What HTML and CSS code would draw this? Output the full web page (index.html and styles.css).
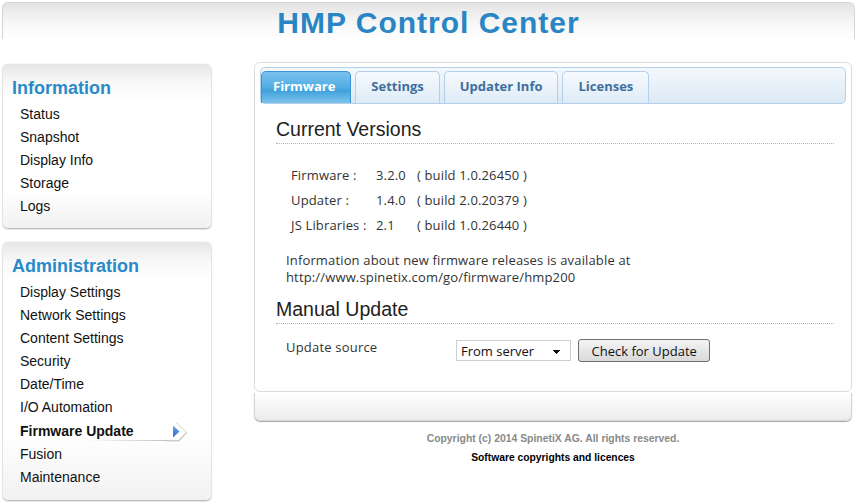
FILE: index.html
```html
<!DOCTYPE html>
<html>

<head>
  <meta charset="UTF-8">
  <meta name="viewport" content="width=device-width, initial-scale=1.0">
  <title>HMP Control Center</title>
  <link rel="stylesheet" href="styles.css">
</head>

<body>
  <div class="header">
    <h1>HMP Control Center</h1>
  </div>

  <div class="layout">
    <div class="sidebar">
      <div class="menu">
        <div class="menu-title">Information</div>
        <ul class="menu-list">
          <li class="menu-item">Status</li>
          <li class="menu-item">Snapshot</li>
          <li class="menu-item">Display Info</li>
          <li class="menu-item">Storage</li>
          <li class="menu-item">Logs</li>
        </ul>
      </div>
      <div class="menu">
        <div class="menu-title">Administration</div>
        <ul class="menu-list">
          <li class="menu-item">Display Settings</li>
          <li class="menu-item">Network Settings</li>
          <li class="menu-item">Content Settings</li>
          <li class="menu-item">Security</li>
          <li class="menu-item">Date/Time</li>
          <li class="menu-item">I/O Automation</li>
          <li class="menu-item active">
            <span class="active-label">Firmware Update</span>
            <svg class="arrow" width="24" height="23" viewBox="0 0 24 23">
              <defs>
                <linearGradient id="tri" x1="0" y1="0" x2="0" y2="1">
                  <stop offset="0" stop-color="#6aa6ee" />
                  <stop offset="1" stop-color="#2a6cc9" />
                </linearGradient>
              </defs>
              <polygon points="0,2.5 10,2.5 20.5,12 12.5,20.5 0,20.5" fill="#fff" />
              <polyline points="10,2.5 20.5,12 12.5,20.5" fill="none" stroke="#d4d4d4" stroke-width="1" />
              <polyline points="20.5,12.8 13,20.8 0,20.8" fill="none" stroke="#b5b5b5" stroke-width="1" />
              <polygon points="7,5.5 13.5,11.5 7,17.5" fill="url(#tri)" />
            </svg>
          </li>
          <li class="menu-item">Fusion</li>
          <li class="menu-item">Maintenance</li>
        </ul>
      </div>
    </div>

    <div class="main">
      <div class="panel">
        <div class="tabs">
          <div class="tab selected">Firmware</div>
          <div class="tab">Settings</div>
          <div class="tab">Updater Info</div>
          <div class="tab">Licenses</div>
        </div>

        <h2 class="section">Current Versions</h2>
        <table class="versions">
          <tr>
            <td class="v-label">Firmware :</td>
            <td class="v-num">3.2.0</td>
            <td>( build 1.0.26450 )</td>
          </tr>
          <tr>
            <td class="v-label">Updater :</td>
            <td class="v-num">1.4.0</td>
            <td>( build 2.0.20379 )</td>
          </tr>
          <tr>
            <td class="v-label">JS Libraries :</td>
            <td class="v-num">2.1</td>
            <td>( build 1.0.26440 )</td>
          </tr>
        </table>
        <p class="info">Information about new firmware releases is available at<br>http://www.spinetix.com/go/firmware/hmp200</p>

        <h2 class="section">Manual Update</h2>
        <div class="update-row">
          <span class="update-label">Update source</span>
          <select class="source">
            <option>From server</option>
          </select>
          <button class="check">Check for Update</button>
        </div>
      </div>
      <div class="panel-foot"></div>

      <div class="copyright">Copyright (c) 2014 SpinetiX AG. All rights reserved.</div>
      <div class="licences">Software copyrights and licences</div>
    </div>
  </div>
</body>

</html>
```

FILE: styles.css
```css
html {
  background: #fff;
}

body {
  margin: 0;
  font-family: "Liberation Sans", Arial, sans-serif;
  color: #111;
}

.header {
  margin: 2px 3px 0 2px;
  height: 36px;
  border: 1px solid #d6d6d6;
  border-bottom: 0;
  border-radius: 6px 6px 0 0;
  background: linear-gradient(#e3e3e3, #f7f7f7 55%, #fff);
}

.header h1 {
  margin: 0;
  text-align: center;
  font-size: 30px;
  line-height: 40px;
  letter-spacing: 1px;
  color: #2985c3;
}

.layout {
  display: flex;
  padding-left: 3px;
  margin-top: 23px;
}

/* sidebar */
.sidebar {
  width: 208px;
  margin-top: 2px;
}

.menu {
  margin-bottom: 14px;
  border-radius: 5px;
  box-shadow: 0 1px 2px rgba(0, 0, 0, 0.35), 0 0 1px rgba(0, 0, 0, 0.15);
  background: #fff;
}

.menu-title {
  height: 20px;
  padding: 14px 0 4px 9px;
  line-height: 20px;
  font-size: 18px;
  font-weight: bold;
  color: #2a8ac8;
  border-radius: 5px 5px 0 0;
  background: linear-gradient(#e6e6e6, #f8f8f8 50%, #fff);
}

.menu-list {
  list-style: none;
  margin: 0;
  padding: 1px 0 10px;
  border-radius: 0 0 5px 5px;
  background: linear-gradient(#fff 70%, #f1f1f1);
}

.menu:last-child .menu-list {
  padding: 0.5px 0 11px;
}

.menu-item {
  height: 23.1px;
  line-height: 23px;
  padding-left: 17px;
  font-size: 14px;
}

.menu-item.active {
  display: flex;
  font-weight: bold;
}

.active-label {
  width: 146px;
  background: linear-gradient(to right, transparent 45%, #c2c2c2) no-repeat left bottom 2px / 100% 1px;
}

/* main area */
.main {
  width: 598px;
  margin-left: 43px;
}

.panel {
  border: 1px solid #dcdcdc;
  border-radius: 6px;
  padding: 4px 5px 29px;
  font-family: "Open Sans", sans-serif;
  font-size: 13px;
  color: #333;
}

.tabs {
  display: flex;
  gap: 4px;
  height: 32px;
  padding: 3px 0 0 0;
  border: 1px solid #b3cfe9;
  border-radius: 5px;
  background: linear-gradient(#f3f8fc, #dce9f5);
}

.tab {
  padding: 0 15px;
  line-height: 29px;
  height: 31px;
  margin-bottom: -1px;
  border: 1px solid #b3cfe9;
  border-bottom: 0;
  border-radius: 5px 5px 0 0;
  background: linear-gradient(#f6fafd, #deebf6);
  font-family: "Open Sans", sans-serif;
  font-weight: bold;
  font-size: 13px;
  color: #3f6f9d;
}

.tab.selected {
  padding: 0 15px 0 11px;
  border-color: #3b93d6;
  background: linear-gradient(#79c2ee, #52ade3 50%, #3ea1dc 60%, #7ec3ec);
  color: #fff;
}

.section {
  margin: 13px 12px 0 16px;
  padding-bottom: 2px;
  border-bottom: 1px dotted #b5b5b5;
  font-family: "Liberation Sans", Arial, sans-serif;
  font-weight: normal;
  font-size: 19.5px;
  line-height: 24px;
  color: #222;
}

.info + .section {
  margin-top: 11px;
}

.versions {
  margin: 19px 0 0 31px;
  border-collapse: collapse;
  letter-spacing: 0.15px;
}

.versions td {
  padding: 0;
  height: 25px;
  line-height: 25px;
  white-space: pre;
}

.v-label {
  width: 85px;
}

.v-num {
  width: 41px;
}

.info {
  margin: 14px 0 0 26px;
  line-height: 17px;
  letter-spacing: 0.15px;
}

.update-row {
  display: flex;
  align-items: flex-start;
  margin: 15px 0 0 26px;
}

.update-label {
  width: 170px;
  line-height: 17px;
  letter-spacing: 0.2px;
}

.source {
  appearance: none;
  width: 115px;
  height: 21px;
  margin: 1px 0 0;
  padding: 0 0 0 4px;
  border: 1px solid #cfcfcf;
  border-radius: 0;
  font-family: "Open Sans", sans-serif;
  font-size: 13px;
  color: #111;
  background-color: #fff;
  background-image: linear-gradient(45deg, transparent 50%, #111 50%), linear-gradient(135deg, #111 50%, transparent 50%);
  background-position: 96px 9px, 100px 9px;
  background-size: 4px 4px;
  background-repeat: no-repeat;
}

.check {
  height: 23px;
  margin: 0 0 0 7px;
  padding: 0 12.5px;
  border: 1px solid #6f6f6f;
  border-radius: 3px;
  background: linear-gradient(#f4f4f4, #e6e6e6 50%, #d9d9d9);
  font-family: "Open Sans", sans-serif;
  font-size: 13px;
  color: #111;
}

.panel-foot {
  height: 27px;
  margin-top: 1px;
  border: 1px solid #d4d4d4;
  border-top: 0;
  border-radius: 0 0 6px 6px;
  background: linear-gradient(#fff, #ececec);
  box-shadow: 0 1px 1px rgba(0, 0, 0, 0.35);
}

.copyright {
  margin-top: 11px;
  text-align: center;
  font-size: 10.4px;
  line-height: 14px;
  font-weight: bold;
  color: #8a8a8a;
}

.licences {
  margin-top: 5px;
  text-align: center;
  font-size: 10.3px;
  line-height: 14px;
  font-weight: bold;
  color: #000;
}
```
